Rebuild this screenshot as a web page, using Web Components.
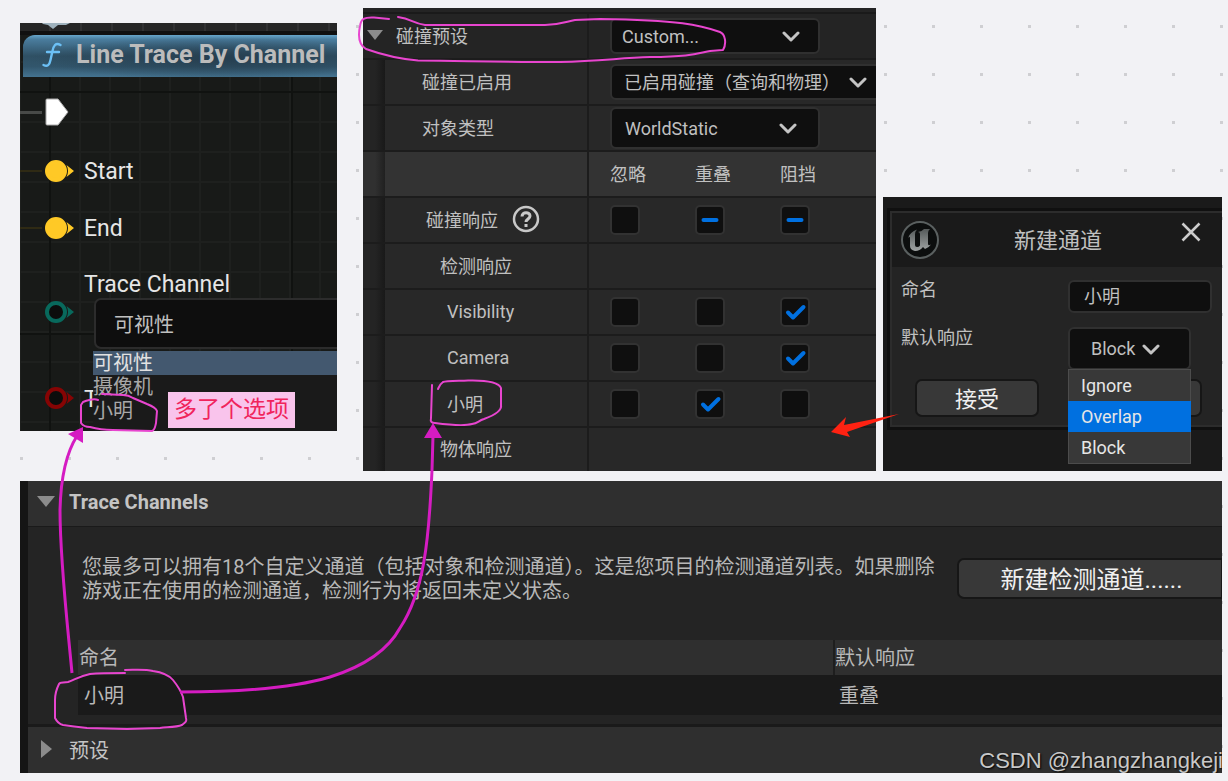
<!DOCTYPE html>
<html lang="zh-CN">
<head>
<meta charset="utf-8">
<title>Trace Channels</title>
<style>
  body { margin: 0; background: #f2f2f5; font-family: Roboto, "Noto Sans CJK SC", sans-serif; }
</style>
</head>
<body>
<note-board>
  <blueprint-node slot="top"></blueprint-node>
  <collision-panel slot="top"></collision-panel>
  <channel-dialog slot="top"></channel-dialog>
  <channel-settings></channel-settings>
</note-board>

<script>
const define = (name, html, setup) => {
  customElements.define(name, class extends HTMLElement {
    constructor() {
      super();
      const root = this.attachShadow({ mode: "open" });
      root.innerHTML = html;
    }
    connectedCallback() { if (setup) setup(this, this.shadowRoot); }
  });
};

/* Drop-down with a chevron drawn over the native control */
define("ue-select", `
<style>
  :host { display: block; position: relative; }
  select {
    appearance: none; display: block; box-sizing: border-box; width: 100%; height: var(--h, 36px);
    margin: 0; padding: 0 0 0 var(--pad, 12px); border: 2px solid #303030; border-radius: 6px;
    background: #0f0f0f; color: #c0c0c0; font: inherit; font-size: 18px;
  }
  svg { position: absolute; right: var(--chev, 20px); top: 50%; margin-top: -5px; pointer-events: none; }
</style>
<select></select>
<svg width="18" height="12" viewBox="0 0 18 12" fill="none" stroke="#c4c4c4" stroke-width="3" stroke-linecap="round" stroke-linejoin="round"><path d="M2 2l7 7 7-7"/></svg>`,
(el, root) => {
  const s = root.querySelector("select");
  s.setAttribute("aria-label", el.getAttribute("label"));
  s.append(new Option(el.getAttribute("value")));
});

/* Tick box: state is "", "on" or "mixed" */
define("ue-check", `
<style>
  :host { display: block; position: relative; width: 30px; height: 30px; }
  input { appearance: none; display: block; box-sizing: border-box; width: 30px; height: 30px; margin: 0; border: 2px solid #323232; border-radius: 5px; background: #0f0f0f; }
  svg { position: absolute; left: 0; top: 0; pointer-events: none; }
  path { display: none; fill: none; stroke: #0070e0; stroke-width: 4; stroke-linecap: round; stroke-linejoin: round; }
  :host([state="on"]) .tick, :host([state="mixed"]) .dash { display: block; }
</style>
<input type="checkbox">
<svg width="30" height="30" viewBox="0 0 30 30"><path class="tick" d="M8 15.500l5 5L23.500 10"/><path class="dash" d="M8.500 15H21.500"/></svg>`,
(el, root) => {
  const i = root.querySelector("input");
  i.setAttribute("aria-label", el.getAttribute("label"));
  i.checked = el.getAttribute("state") === "on";
  i.indeterminate = el.getAttribute("state") === "mixed";
});

/* Value pin of a blueprint node */
define("node-pin", `
<style>
  :host { display: block; width: 30px; height: 24px; color: #ffc926; }
  svg { display: block; }
  circle { fill: currentColor; stroke: currentColor; stroke-width: 4; }
  :host([hollow]) circle { fill: #0c0d0c; }
  path { fill: currentColor; }
</style>
<svg width="30" height="24" viewBox="0 0 30 24"><circle cx="11" cy="12" r="9"/><path d="M21.500 6l7.500 6-7.500 6q3-6 0-12z"/></svg>`);

define("blueprint-node", `
<style>
  :host {
    display: block; position: relative; overflow: hidden; color: #e6e6e6;
    background-color: #181a18;
    background-image:
      linear-gradient(90deg, #101210 2px, transparent 2px),
      linear-gradient(#101210 2px, transparent 2px),
      linear-gradient(90deg, #1e201e 2px, transparent 2px),
      linear-gradient(#1e201e 2px, transparent 2px);
    background-size: 242px 242px, 242px 242px, 30px 30px, 30px 30px;
    background-position: 29px 0, 0 68px, 29px 0, 0 8px;
  }
  .strip { height: 12px; box-sizing: border-box; background: repeating-linear-gradient(90deg, transparent 0 29px, #323232 29px 31px) #262626; border-bottom: 4px solid #101010; }
  .strip svg { display: block; margin-left: 22px; }
  h2 {
    display: flex; align-items: center; gap: 14px; height: 42px; margin: 0 0 0 3px; padding: 0 0 3px 19px; box-sizing: border-box;
    border-radius: 12px 0 0 0; color: #bcbcbc; font-size: 25px; font-weight: 700; white-space: nowrap;
    background: radial-gradient(ellipse 60% 50% at 62% 55%, #263e4f, transparent) , linear-gradient(#67a5ca 0, #4a7d9e 10%, #2f5064 50%, #32566c 75%, #447390 100%);
  }
  .pins { padding-top: 8px; }
  .row { display: grid; grid-template-columns: 25px 30px 1fr; column-gap: 0; align-items: center; height: 57px; font-size: 23px; }
  .row span, .row label { padding-left: 9px; }
  .row span { padding-top: 2px; }
  .wire { height: 2px; width: 22px; background: #2f2a14; }
  .exec { box-sizing: border-box; padding-bottom: 3px; }
  .exec .wire { background: #484a48; height: 3px; }
  .channel { height: 93px; grid-template-rows: 42px 51px; }
  .channel label { grid-column: 3; line-height: 28px; padding-top: 16px; }
  .channel node-pin { grid-row: 1 / 3; grid-column: 2; padding-top: 18px; color: #08695c; }
  .combo { grid-column: 3; grid-row: 2; position: relative; margin-left: 19px; }
  .combo select { appearance: none; display: block; width: 110%; height: 51px; box-sizing: border-box; margin: 0; padding: 3px 0 0 18px; border: 2px solid #2c2c2c; border-radius: 7px; background: #0e0e0e; color: #c0c0c0; font: inherit; font-size: 20px; }
  .type { height: 82px; padding-top: 16px; box-sizing: border-box; color: #e6e6e6; }
  .type node-pin { color: #860404; grid-column: 2; }
  ul { position: absolute; z-index: 1; left: 73px; right: 0; bottom: 0; height: 80px; margin: 0; padding: 0; list-style: none; background: linear-gradient(90deg, #1a1a1acc 0, #1a1a1a 6%); color: #a8a8a8; font-size: 20px; line-height: 24px; }
  li.sel { background: #43586f; color: #e2e2e2; }
  .tip { position: absolute; z-index: 2; left: 148px; bottom: 3px; padding: 0 6px; line-height: 36px; font-size: 23px; color: #f0245c; background: #f9c4ec; white-space: nowrap; }
</style>
<div class="strip"><svg width="30" height="8" viewBox="0 0 30 8"><path d="M0 0h28l-4 2h-8l-5 4-5-4-5-1z" fill="#9fb2bd"/></svg></div>
<h2><svg width="20" height="26" viewBox="0 0 20 26" fill="none" stroke="#6cc0f5" stroke-width="2.400" stroke-linecap="round"><path d="M18.500 3c-5-3-7 1-8 6L8.500 18c-1 5-3 7-7 5M5 10h12"/></svg>Line Trace By Channel</h2>
<div class="pins">
  <div class="row exec"><i class="wire"></i><svg width="25" height="28" viewBox="0 0 25 28"><path d="M2 1h11l10 13-10 13H2q-1 0-1-1V2q0-1 1-1z" fill="#fff" stroke="#aaa"/></svg></div>
  <div class="row"><i class="wire"></i><node-pin></node-pin><span>Start</span></div>
  <div class="row"><i class="wire"></i><node-pin></node-pin><span>End</span></div>
  <div class="row channel"><node-pin hollow></node-pin><label for="tc">Trace Channel</label>
    <div class="combo"><select id="tc"><option>可视性</option></select></div></div>
  <div class="row type"><node-pin hollow></node-pin><span>T</span></div>
</div>
<ul><li class="sel">可视性</li><li>摄像机</li><li>小明</li></ul>
<div class="tip">多了个选项</div>`);

const checks = (name, states) => states.map((s, i) =>
  `<td><ue-check state="${s}" label="${name} ${["忽略", "重叠", "阻挡"][i]}"></ue-check></td>`).join("") + "<td></td>";
const gutter = `<td class="g"></td>`;

define("collision-panel", `
<style>
  :host { display: block; overflow: hidden; background: #282828; color: #c0c0c0; font-size: 18px; }
  .strip { height: 6px; box-sizing: border-box; background: #242424; border-bottom: 2px solid #1a1a1a; }
  table { width: 100%; table-layout: fixed; border-collapse: separate; border-spacing: 0; }
  th, td { height: 46px; box-sizing: border-box; padding: 0; border-bottom: 2px solid #1c1c1c; font-weight: 400; text-align: left; white-space: nowrap; }
  tr:last-child > * { height: 43px; border-bottom: 0; }
  .g { background: linear-gradient(90deg, #242424 55%, #191919); }
  th[scope=row] { border-right: 2px solid #1c1c1c; padding-bottom: 2px; }
  tr:last-child th[scope=row] { padding-bottom: 4px; }
  td:nth-child(n+3), .l1 td { padding-left: 21px; }
  .l1 th[scope=row] { padding-left: 33px; background: #242424; }
  .l1 td { background: #242424; }
  .l2 { padding-left: 37px; } .l3 { padding-left: 41px; } .l4 { padding-left: 55px; } .l5 { padding-left: 62px; }
  .head > * { background: #333; padding-bottom: 2px; } .head .g { background: linear-gradient(90deg, #303030 55%, #202020); }
  .title { display: flex; align-items: center; gap: 12px; margin-left: -30px; }
  .help { display: flex; align-items: center; gap: 14px; }
  ue-select { width: 210px; }
  ue-select.wide { width: 275px; --chev: 18px; }
</style>
<div class="strip"></div>
<table>
  <colgroup><col style="width:22px"><col style="width:204px"><col style="width:85px"><col style="width:85px"><col style="width:85px"><col></colgroup>
  <tr class="l1"><th scope="row" colspan="2"><div class="title"><svg width="18" height="12" viewBox="0 0 18 12"><path d="M1 1h16l-8 10z" fill="#8c8c8c"/></svg>碰撞预设</div></th><td colspan="4"><ue-select label="碰撞预设" value="Custom..." style="--pad:10px"></ue-select></td></tr>
  <tr>${gutter}<th scope="row" class="l2">碰撞已启用</th><td colspan="4"><ue-select class="wide" label="碰撞已启用" value="已启用碰撞（查询和物理）"></ue-select></td></tr>
  <tr>${gutter}<th scope="row" class="l2">对象类型</th><td colspan="4"><ue-select label="对象类型" value="WorldStatic" style="--h:42px;--pad:13px;--chev:23px"></ue-select></td></tr>
  <tr class="head">${gutter}<th scope="row"></th><td>忽略</td><td>重叠</td><td>阻挡</td><td></td></tr>
  <tr>${gutter}<th scope="row" class="l3"><div class="help">碰撞响应<svg width="28" height="28" viewBox="0 0 28 28" fill="none" stroke="#c8c8c8" stroke-width="2.500"><circle cx="14" cy="14" r="12"/><path d="M10 11.500c0-5 8-5 8-.5 0 3-4 3-4 6" stroke-width="3"/><path d="M14 19v3" stroke-width="3"/></svg></div></th>${checks("碰撞响应", ["", "mixed", "mixed"])}</tr>
  <tr>${gutter}<th scope="row" class="l4">检测响应</th><td></td><td></td><td></td><td></td></tr>
  <tr>${gutter}<th scope="row" class="l5">Visibility</th>${checks("Visibility", ["", "", "on"])}</tr>
  <tr>${gutter}<th scope="row" class="l5">Camera</th>${checks("Camera", ["", "", "on"])}</tr>
  <tr>${gutter}<th scope="row" class="l5">小明</th>${checks("小明", ["", "on", ""])}</tr>
  <tr>${gutter}<th scope="row" class="l4">物体响应</th><td></td><td></td><td></td><td></td></tr>
</table>`);

define("channel-dialog", `
<style>
  :host { display: block; overflow: hidden; box-sizing: border-box; padding: 11px 0 41px 4px; background: #1a1a1a; color: #c0c0c0; font-size: 18px; }
  section { border: 3px solid #101010; border-right: 0; background: #242424; }
  .frame { border: 2px solid #2c2c2c; border-right: 0; padding-bottom: 8px; }
  header { display: grid; grid-template-columns: 38px 1fr 38px; align-items: center; height: 54px; padding: 0 12px 0 8px; background: #1a1a1a; }
  h2 { margin: 0; padding: 0 0 5px 6px; text-align: center; font-size: 22px; font-weight: 400; }
  header button { align-self: start; width: 38px; height: 38px; padding: 0; border: 0; background: none; }
  header button svg { display: block; margin: 9px; }
  .field { display: grid; grid-template-columns: 167px 1fr; padding: 0 10px 0 9px; align-items: start; }
  .field.a { height: 60px; padding-top: 13px; box-sizing: border-box; }
  .field.b { height: 42px; }
  label { line-height: 20px; }
  .b label { padding-top: 1px; }
  input { box-sizing: border-box; width: 100%; height: 33px; margin: 0; padding: 0 0 3px 14px; border: 2px solid #303030; border-radius: 6px; background: #0f0f0f; color: #c0c0c0; font: inherit; }
  .pick { position: relative; width: 123px; }
  ul { position: absolute; z-index: 2; left: 0; right: 0; top: 42px; margin: 0; padding: 0; list-style: none; border: 1px solid #4c4c4c; background: #383838; color: #e6e6e6; line-height: 31px; }
  li { padding-left: 12px; }
  li.sel { background: #0070e0; margin: 0 -1px; padding-left: 13px; }
  footer { display: grid; grid-template-columns: 124px 124px; gap: 39px; padding: 10px 0 0 23px; }
  footer button { height: 38px; padding: 0 0 2px; border: 2px solid #161616; border-radius: 7px; background: #383838; color: #f0f0f0; font: inherit; font-size: 22px; }
</style>
<section><div class="frame">
  <header>
    <svg width="40" height="40" viewBox="0 0 40 40"><defs><linearGradient id="m" x2="0" y2="1"><stop stop-color="#555a5a"/><stop offset="1" stop-color="#a0a4a4"/></linearGradient></defs><circle cx="20" cy="20" r="18" fill="#0c0e0e" stroke="#5a6060" stroke-width="2"/><path d="M8 18q2-6 9-8.500-2 2-2 5V25q0 2 2 2t3-1.500V14q0-2-2-2 4-.500 6-3h6q-2 1.500-2 4v11q0 2 3 .500-2 3-6 4.500l-2-2q-3 4-8 4-5-1-5-5V18q0-2-2-1z" fill="url(#m)"/></svg>
    <h2>新建通道</h2>
    <button aria-label="关闭"><svg width="20" height="20" viewBox="0 0 20 20" stroke="#ccc" stroke-width="2.500"><path d="M1.500 1.500l17 17M18.500 1.500l-17 17"/></svg></button>
  </header>
  <div class="field a"><label for="n">命名</label><input id="n" value="小明"></div>
  <div class="field b"><label>默认响应</label><div class="pick"><ue-select label="默认响应" value="Block" style="--h:43px;--pad:21px;--chev:31px"></ue-select>
    <ul><li>Ignore</li><li class="sel">Overlap</li><li>Block</li></ul></div></div>
  <footer><button>接受</button><button aria-label="取消"></button></footer>
</div></section>`);

define("channel-settings", `
<style>
  :host { display: block; position: relative; overflow: hidden; border-left: 8px solid #151515; background: #242424; color: #b8b8b8; font-size: 20px; }
  h2, .preset { display: flex; align-items: center; gap: 13px; height: 46px; box-sizing: border-box; margin: 0; padding: 0 0 4px 8px; background: #2f2f2f; font-size: 20px; font-weight: 700; border-bottom: 1px solid #1a1a1a; color: #c4c4c4; }
  .preset { height: 49px; border: 0; border-top: 3px solid #1a1a1a; padding: 0 0 2px 8px; font-weight: 400; }
  .intro { display: flex; justify-content: space-between; align-items: flex-start; gap: 12px; height: 113px; box-sizing: border-box; padding: 28px 0 0 54px; }
  p { margin: 0; line-height: 24px; white-space: nowrap; }
  .intro button { flex: none; width: 266px; height: 41px; margin: 3px -1px 0 0; padding: 0 0 4px 3px; border: 2px solid #161616; border-radius: 7px 0 0 7px; background: #383838; color: #f0f0f0; font: inherit; font-size: 24px; }
  table { width: calc(100% - 50px); margin: 0 0 9px 50px; border-collapse: separate; border-spacing: 0; table-layout: fixed; }
  th { box-sizing: border-box; height: 35px; padding: 0 0 3px 1px; background: #2f2f2f; font-weight: 400; text-align: left; }
  th + th { border-left: 2px solid #1e1e1e; padding-left: 0; }
  td { box-sizing: border-box; height: 40px; padding: 0 0 2px 6px; background: #1a1a1a; }
  .mark { position: absolute; right: -1px; bottom: -4px; color: #c8c8c8; font: 22px/32px "Liberation Sans", sans-serif; text-shadow: 1px 1px 2px #000; }
</style>
<h2><svg width="20" height="14" viewBox="0 0 20 14"><path d="M1 1h18l-9 11z" fill="#8c8c8c"/></svg>Trace Channels</h2>
<div class="intro">
  <p>您最多可以拥有18个自定义通道（包括对象和检测通道）。这是您项目的检测通道列表。如果删除<br>游戏正在使用的检测通道，检测行为将返回未定义状态。</p>
  <button>新建检测通道......</button>
</div>
<table>
  <colgroup><col style="width:66%"><col></colgroup>
  <tr><th>命名</th><th>默认响应</th></tr>
  <tr><td>小明</td><td>重叠</td></tr>
</table>
<div class="preset"><svg width="20" height="20" viewBox="0 0 20 20"><path d="M5 1v18l11-9z" fill="#8c8c8c"/></svg>预设</div>
<div class="mark">CSDN @zhangzhangkeji</div>`);

/* Dotted canvas that holds the panels, with pen marks drawn on top */
define("note-board", `
<style>
  :host {
    display: block; position: relative; box-sizing: border-box; padding: 8px 6px 8px 20px; min-height: 100vh;
    background: conic-gradient(from 90deg at 45px 45px, #cfcfd2 90deg, #f2f2f5 0) 23px 28px / 48px 48px;
  }
  .top { display: grid; grid-template-columns: 343fr 513fr 346fr; align-items: end; margin-bottom: 10px; }
  ::slotted(blueprint-node) { margin: 15px 26px 40px 0; align-self: start; }
  ::slotted(channel-dialog) { margin-left: 7px; }
  .pen { position: absolute; inset: 0; width: 100%; height: 100%; pointer-events: none; z-index: 5; fill: none; stroke: #e845cf; stroke-width: 2; stroke-linecap: round; stroke-linejoin: round; }
  .arrow { stroke: #d51cc2; stroke-width: 3; }
  .tip { fill: #d51cc2; stroke: none; }
</style>
<div class="top"><slot name="top"></slot></div>
<slot></slot>
<svg class="pen" viewBox="0 0 1228 781" preserveAspectRatio="none" aria-hidden="true">
  <path d="M389 19L374 17.500C364 17 361 19 360 26 357 40 361 46 366 49 380 54 400 59 418 60.500 470 61 500 62 560 62 600 61 620 58 650 57 690 56.500 695 54 710 51L723 50C727 43 725 34 720 32 700 25 680 20 600 19L575 20C565 22 562 24.500 545 25H425C412 23 412 19 398 17"/>
  <path d="M432 385L431 418C430 422 432 423 435 423 450 425 465 426 472 424 478 423 478 421 484 419 495 415 502 410 501 405V388C499 383 488 380 468 380.500 455 381 445 381 443 382 440 384 439 387 438 389"/>
  <path d="M98 400C94 398 88 400 83 402L81 405V423C83 426 86 427 90 427 97 429 105 430 113 430L152 431C155 430 155 427 156 423L157 411C156 408 152 406 147 404L133 398C130 396 127 395 123 395L102 394"/>
  <path d="M125 673C112 673 100 673 90 674 80 676 76 679 68 682 63 683 60 682 59 684 56 690 55 695 55 700V718C57 722 59 724 63 725 70 726 78 727 87 728L127 729 160 728C170 727 177 727 182 725 186 722 187 721 186 718L183 697C181 691 177 685 173 680 168 674 160 672 153 671 145 669 135 670 125 670"/>
  <path class="arrow" stroke-linecap="butt" d="M72 673C67 620 60 560 60 510 61 470 68 450 77 436"/>
  <path class="tip" d="M83 427L68 434 83 443z"/>
  <path class="arrow" stroke-linecap="butt" d="M180 692C232 692 290 689 330 677 365 666 388 650 400 628 424 592 429 540 432 470L433 436"/>
  <path class="tip" d="M433 423L424 438H442z"/>
  <path d="M831 432L846 417 844 425 899 414 847 432 850 437z" fill="#ff2212" stroke="none"/>
</svg>`);
</script>
</body>
</html>
